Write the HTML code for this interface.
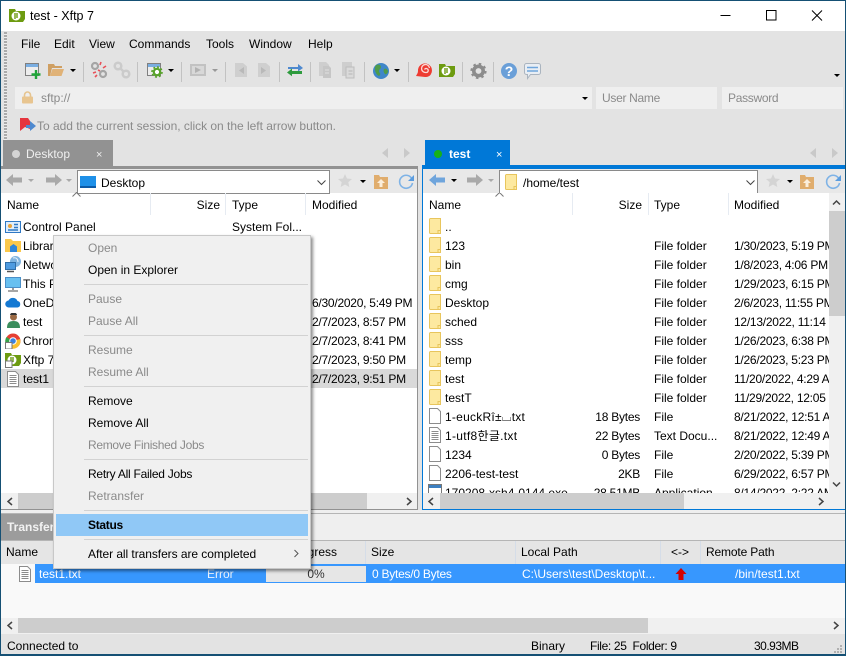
<!DOCTYPE html>
<html><head><meta charset="utf-8"><style>
html,body{margin:0;padding:0}
body{width:846px;height:656px;overflow:hidden;position:relative;background:#e3e3e3;font:12px "Liberation Sans","Noto Sans CJK KR",sans-serif;color:#000}
div,svg{position:absolute}
.t{line-height:18px;height:18px;white-space:nowrap}
.r{text-align:right}
.g{color:#8a8a8a}
.d{letter-spacing:-.25px}
.s{width:1px;background:#c2c2c2;height:20px;top:62px}
.sep{left:30px;width:224px;height:1px;background:#d2d2d2}
.dd{width:0;height:0;border-left:3px solid transparent;border-right:3px solid transparent;border-top:3px solid #000}
.ddg{width:0;height:0;border-left:3px solid transparent;border-right:3px solid transparent;border-top:3px solid #999}
.cs{width:1px;top:193px;height:22px;background:#e6ebf2}
.w{color:#fff}
</style></head><body>
<svg width="0" height="0" style="left:0;top:0"><defs>
<symbol id="fo" viewBox="0 0 12 16"><path d="M.5 1.500a1 1 0 0 1 1-1h10v15h-10a1 1 0 0 1-1-1z" fill="#fde9a0" stroke="#e8c55c"/><path d="M9 12.500h2.500v3H9z" fill="#fde9a0" stroke="#e8c55c"/></symbol>
<symbol id="fi" viewBox="0 0 12 16"><path d="M.5.500h8l3 3v12H.5z" fill="#fff" stroke="#8c8c8c"/></symbol>
<symbol id="do" viewBox="0 0 12 16"><path d="M.5.500h8l3 3v12H.5z" fill="#fff" stroke="#8c8c8c"/><path d="M2.500 4.500h7M2.500 6.500h7M2.500 8.500h7M2.500 10.500h7M2.500 12.500h7" stroke="#8c8c8c"/></symbol>
<symbol id="xf" viewBox="0 0 16 14"><path d="M0 0h6l1 2h9v8l-2 3h-14z" fill="#6d9b10"/><circle cx="7" cy="7" r="4.500" fill="#fff"/><path d="M6 4v6M8 4v5" stroke="#6d9b10" stroke-width="1.400"/></symbol>
</defs></svg>

<!-- Frame -->
<div style="left:0;top:0;width:846px;height:656px;box-sizing:border-box;border:1px solid #155074;z-index:50;border-bottom-width:2px;pointer-events:none"></div>
<div style="left:0;top:0;width:846px;height:31px;background:#fff"></div>
<svg style="left:9px;top:9px" width="16" height="13"><use href="#xf" width="16" height="14"/></svg>
<div class="t" style="left:30px;top:7px;font-size:12.500px">test - Xftp 7</div>
<svg style="left:720px;top:5px" width="120" height="22"><path d="M.5 10.500H10.500" stroke="#000" fill="none"/><path d="M46.500 5.500h9.500v9.500h-9.500z" stroke="#000" fill="none"/><path d="M92 5.500L102 15.500M102 5.500L92 15.500" stroke="#000" fill="none"/></svg>

<!-- gripper -->
<div style="left:4px;top:32px;width:3px;height:108px;background:repeating-linear-gradient(#aaa 0 2px,#eee 2px 3px)"></div>

<!-- Menu -->
<div class="t" style="left:21px;top:35px">File</div>
<div class="t" style="left:54px;top:35px">Edit</div>
<div class="t" style="left:89px;top:35px">View</div>
<div class="t" style="left:129px;top:35px">Commands</div>
<div class="t" style="left:206px;top:35px">Tools</div>
<div class="t" style="left:249px;top:35px">Window</div>
<div class="t" style="left:308px;top:35px">Help</div>

<!-- Toolbar (absolute coordinates) -->
<svg style="left:0;top:0" width="560" height="90" fill="none">
<path d="M25.500 63.500h13v12h-13z" fill="#ededed" stroke="#808080"/><path d="M26 64h12v3H26z" fill="#7aaee2"/><path d="M36 70v9M31.500 74.500h9" stroke="#21a53a" stroke-width="2.400"/>
<path d="M48 64h6l1 2h7v2H52l-2 8h-2z" fill="#cf9f62"/><path d="M50 76l2.500-7h11.500l-2.500 7z" fill="#e0b277"/>
<g stroke="#a5a5a5" stroke-width="2.200"><circle cx="95" cy="66" r="3"/><circle cx="103" cy="74" r="3"/></g><path d="M101 62l-1 3M106 66l-3 2M93 73l3-1M95 77l2-2M98 70l2 1" stroke="#e8525a" stroke-width="1.600"/>
<g stroke="#cbcbcb" stroke-width="2.500"><circle cx="118" cy="66" r="3.300"/><circle cx="126" cy="74" r="3.300"/><path d="M120 68l4 4"/></g>
<path d="M147.500 63.500h13v12h-13z" fill="#ededed" stroke="#808080"/><path d="M148 64h12v3h-12z" fill="#7aaee2"/><circle cx="157" cy="72" r="3.200" stroke="#57a32a" stroke-width="2.200" fill="#fff"/><circle cx="157" cy="72" r="5" stroke="#57a32a" stroke-dasharray="2 1.900" stroke-width="1.600"/>
<path d="M191 65h14v10h-14z" stroke="#c2c2c2" stroke-width="2" fill="#d8d8d8"/><path d="M195 67l6 3-6 3z" fill="#b2b2b2"/>
<path d="M235 63h8l4 3.500V77h-12z" fill="#cfcfcf"/><path d="M244 67l-5 3.500 5 3.500z" fill="#b9b9b9"/>
<path d="M258 63h8l4 3.500V77h-12z" fill="#cfcfcf"/><path d="M261 67l5 3.500-5 3.500z" fill="#b9b9b9"/>
<path d="M288 67h10v-3l5 4-5 3.500v-2.500h-10z" fill="#4e89cf"/><path d="M302 71h-10v-2.500l-5 4 5 3.800V74h10z" fill="#2e9b3e"/>
<path d="M319 62h7l3 3v11h-10z" fill="#cecece"/><path d="M325 66h4l2 2v10h-8V66z" fill="#c6c6c6"/><path d="M325 70h4M325 73h4" stroke="#e0e0e0"/>
<path d="M342 62h9v3h-9z" fill="#cecece"/><path d="M342 62h10v14h-10z" fill="#cecece"/><path d="M347 67h7v11h-8V67z" fill="#dadada" stroke="#bcbcbc"/><path d="M348.500 71h4M348.500 74h4" stroke="#b5b5b5"/>
<circle cx="381" cy="71" r="8" fill="#3f87c9"/><path d="M376 65c3-1 5 0 5 2s-2 2-2 4 2 2 1 4-3 0-4-2-2-5 0-8zM384 69c2-1 3 0 4 2 0 2-2 4-3 3s-2-3-1-5z" fill="#4f9b4a"/>
<path d="M416 76c1-2 2-3 2-5a7 7 0 1 1 13 3c-1 2-3 3-6 3z" fill="#ee3b32"/><path d="M424.500 69.500a2 2 0 1 1 1.500 3 4 4 0 1 1 3.500-4.500" stroke="#fbd9d6" stroke-width="1.300"/>
<use href="#xf" x="439" y="64" width="16" height="14"/>
<circle cx="478.500" cy="71" r="4.700" stroke="#8c8c8c" stroke-width="3.600"/><circle cx="478.500" cy="71" r="7" stroke="#8c8c8c" stroke-width="2.200" stroke-dasharray="2.500 3"/>
<circle cx="509" cy="71" r="8" fill="#6a9fd8"/>
<text x="509" y="76" font-family="Liberation Sans" font-weight="bold" font-size="14" fill="#fff" text-anchor="middle">?</text>
<path d="M526.500 63.500h12a2 2 0 0 1 2 2v7a2 2 0 0 1-2 2h-8l-3 4v-4h-1a2 2 0 0 1-2-2v-7a2 2 0 0 1 2-2z" fill="#e9eef4" stroke="#aab4bf"/><path d="M527 67.500h11M527 71h11" stroke="#6fa5dc" stroke-width="1.600"/>
</svg>
<div class="s" style="left:83px"></div><div class="s" style="left:137px"></div><div class="s" style="left:181px"></div><div class="s" style="left:225px"></div><div class="s" style="left:279px"></div><div class="s" style="left:310px"></div><div class="s" style="left:364px"></div><div class="s" style="left:408px"></div><div class="s" style="left:462px"></div><div class="s" style="left:493px"></div>
<div class="dd" style="left:70px;top:69px"></div><div class="dd" style="left:168px;top:69px"></div><div class="ddg" style="left:212px;top:69px"></div><div class="dd" style="left:394px;top:69px"></div><div class="dd" style="left:834px;top:74px"></div>

<!-- Address bar -->
<div style="left:15px;top:87px;width:577px;height:22px;background:#efefef"></div>
<div style="left:596px;top:87px;width:121px;height:22px;background:#efefef"></div>
<div style="left:722px;top:87px;width:121px;height:22px;background:#efefef"></div>
<svg style="left:22px;top:91px" width="11" height="13"><path d="M2.500 6V4a3 3 0 0 1 6 0v2" fill="none" stroke="#e6c48f" stroke-width="1.600"/><rect x="0" y="5.500" width="11" height="7" rx="1" fill="#e8c590"/></svg>
<div class="t g" style="left:41px;top:89px">sftp://</div>
<div class="dd" style="left:582px;top:97px"></div>
<div class="t g" style="left:602px;top:89px;letter-spacing:-.3px">User Name</div>
<div class="t g" style="left:728px;top:89px;letter-spacing:-.3px">Password</div>

<!-- Session hint -->
<svg style="left:20px;top:118px" width="16" height="15"><path d="M0 0h8l2 3v8l-5-2-5 4z" fill="#e5353e"/><path d="M6 7h4V3l6 5-6 5V10H6z" fill="#4e89cf"/></svg>
<div class="t g" style="left:37px;top:117px;letter-spacing:-.02px">To add the current session, click on the left arrow button.</div>

<!-- Tabs -->
<div style="left:3px;top:140px;width:110px;height:26px;background:#929292"></div>
<div style="left:12px;top:150px;width:8px;height:8px;border-radius:50%;background:#d4d4d4"></div>
<div class="t" style="left:26px;top:145px;color:#f0f0f0">Desktop</div>
<div class="t" style="left:96px;top:146px;color:#eee;font-size:11px">×</div>
<svg style="left:381px;top:147px" width="30" height="12"><path d="M7 1v10L1 6zM23 1v10l6-5z" fill="#c9c9c9"/></svg>

<div style="left:425px;top:140px;width:85px;height:26px;background:#0078d7"></div>
<div style="left:434px;top:150px;width:8px;height:8px;border-radius:50%;background:#17b117"></div>
<div class="t w" style="left:449px;top:145px;font-weight:bold">test</div>
<div class="t w" style="left:496px;top:146px;font-size:11px">×</div>
<svg style="left:809px;top:147px" width="30" height="12"><path d="M7 1v10L1 6zM23 1v10l6-5z" fill="#c9c9c9"/></svg>

<!-- Left pane -->
<div style="left:1px;top:166px;width:417px;height:344px;background:#fff"></div>
<div style="left:1px;top:166px;width:417px;height:3px;background:#929292"></div>
<div style="left:417px;top:166px;width:1px;height:344px;background:#929292"></div>
<div style="left:1px;top:509px;width:417px;height:1px;background:#929292"></div>
<div style="left:1px;top:169px;width:416px;height:24px;background:#e8e8e8"></div>
<svg style="left:6px;top:173px" width="70" height="16"><path d="M0 7l7-6v3.500h9v5H7V13z" fill="#a9a9a9"/><path d="M22 6h6l-3 3z" fill="#aaa"/><path d="M56 7l-7-6v3.500h-9v5h9V13z" fill="#a9a9a9"/><path d="M60 6h6l-3 3z" fill="#aaa"/></svg>
<div style="left:77px;top:170px;width:251px;height:22px;background:#fff;border:1px solid #8a8a8a"></div>
<svg style="left:80px;top:176px" width="16" height="13"><rect width="16" height="12" fill="#1e90e8"/><rect y="10" width="16" height="2" fill="#0c5aa6"/></svg>
<div class="t" style="left:101px;top:174px">Desktop</div>
<svg style="left:317px;top:180px" width="10" height="6"><path d="M.5.500L4.500 4.500 8.500.500" stroke="#444" fill="none"/></svg>
<svg style="left:338px;top:172px" width="78" height="18"><path d="M7 2l2 4.500 5 .5-3.700 3.300 1 4.700L7 12.500 2.700 15l1-4.700L0 7l5-.5z" fill="#d4d4d4"/><path d="M22 8h6l-3 3z" fill="#000"/><path d="M36 3h5l1 2h8v12h-14z" fill="#e0ad6d"/><path d="M43 7l-4 4h2.500v4h3v-4H47z" fill="#fbeedb"/><path d="M74 7a6.500 6.500 0 1 0 .5 4" fill="none" stroke="#7fb3e6" stroke-width="1.600"/><path d="M76 3v6h-6z" fill="#5b9de0"/></svg>
<!-- left header -->
<div class="t" style="left:7px;top:196px">Name</div>
<div class="t r" style="left:150px;width:70px;top:196px">Size</div>
<div class="t" style="left:232px;top:196px">Type</div>
<div class="t" style="left:312px;top:196px">Modified</div>
<div class="cs" style="left:150px"></div><div class="cs" style="left:225px"></div><div class="cs" style="left:305px"></div>
<svg style="left:72px;top:192px" width="9" height="5"><path d="M.5 4.500L4.500.5l4 4" stroke="#777" fill="none"/></svg>

<!-- left rows -->
<div style="left:1px;top:369px;width:416px;height:19px;background:#d9d9d9"></div>
<svg style="left:5px;top:221px" width="16" height="12"><rect x=".5" y=".5" width="15" height="11" fill="#dfeefc" stroke="#2f78c4"/><rect x="3" y="3" width="4" height="4" rx="2" fill="#e8a33a"/><path d="M9 3.500h4M9 6.500h4M3 9h10" stroke="#2f78c4" stroke-width="1.400"/></svg>
<div class="t" style="left:23px;top:218px">Control Panel</div>
<div class="t" style="left:232px;top:218px">System Fol...</div>
<svg style="left:5px;top:238px" width="16" height="14"><path d="M0 1h6l2 2h8v11H0z" fill="#fbc84a"/><path d="M5 8.500l3.500-2.500 3.500 2.500v5.500H5z" fill="#2f86d8"/></svg>
<div class="t" style="left:23px;top:237px">Library</div>
<svg style="left:5px;top:256px" width="16" height="17"><circle cx="10.500" cy="5.500" r="5.500" fill="#7fb4e0"/><path d="M8 2c3-1 5 1 5 4" stroke="#e8f2fb" fill="none"/><rect x=".5" y="6.500" width="10" height="7" fill="#4e9be0" stroke="#2f6ea8"/><path d="M2 15.500h7" stroke="#555" stroke-width="1.500"/></svg>
<div class="t" style="left:23px;top:256px">Network</div>
<svg style="left:5px;top:277px" width="16" height="15"><rect x=".5" y=".5" width="15" height="10" fill="#68c0f0" stroke="#4a8fc8"/><path d="M8 11v2" stroke="#999" stroke-width="2"/><path d="M3 14h10" stroke="#888" stroke-width="1.500"/></svg>
<div class="t" style="left:23px;top:275px">This PC</div>
<svg style="left:5px;top:297px" width="16" height="11"><path d="M4 10.500a3.500 3.500 0 0 1-.5-7A5 5 0 0 1 12.500 4a3.300 3.300 0 0 1 0 6.500z" fill="#1479d3"/></svg>
<div class="t" style="left:23px;top:294px">OneDrive</div>
<div class="t d" style="left:312px;top:294px">6/30/2020, 5:49 PM</div>
<svg style="left:7px;top:313px" width="13" height="16"><circle cx="6.500" cy="4" r="3.500" fill="#9b6a45"/><path d="M3 2a3.500 2.500 0 0 1 7 0H3z" fill="#333"/><path d="M0 15c0-5 2-7 6.500-7s6.500 2 6.500 7z" fill="#3a8d5c"/></svg>
<div class="t" style="left:23px;top:313px">test</div>
<div class="t d" style="left:312px;top:313px">2/7/2023, 8:57 PM</div>
<svg style="left:5px;top:333px" width="16" height="16"><circle cx="8" cy="8" r="7.500" fill="#e64034"/><path d="M8 8L1.500 4A7.500 7.500 0 0 0 6 15.500z" fill="#37a24b"/><path d="M8 8l7-2a7.500 7.500 0 0 1-9 9.500z" fill="#fbc02d"/><circle cx="8" cy="8" r="3.300" fill="#3b82e0" stroke="#fff"/><rect x=".5" y="9.500" width="6.500" height="6.500" fill="#fff" stroke="#777"/></svg>
<div class="t" style="left:23px;top:332px">Chrome</div>
<div class="t d" style="left:312px;top:332px">2/7/2023, 8:41 PM</div>
<svg style="left:5px;top:353px" width="16" height="15"><use href="#xf" width="16" height="14"/><rect x=".5" y="8" width="6.500" height="6.500" fill="#fff" stroke="#777"/></svg>
<div class="t" style="left:23px;top:351px">Xftp 7</div>
<div class="t d" style="left:312px;top:351px">2/7/2023, 9:50 PM</div>
<svg style="left:7px;top:371px" width="12" height="16"><use href="#do" width="12" height="16"/></svg>
<div class="t" style="left:23px;top:370px">test1</div>
<div class="t d" style="left:312px;top:370px">2/7/2023, 9:51 PM</div>

<!-- left hscroll -->
<div style="left:1px;top:493px;width:416px;height:16px;background:#f0f0f0"></div>
<div style="left:18px;top:493px;width:349px;height:16px;background:#cdcdcd"></div>
<svg style="left:6px;top:497px" width="8" height="9"><path d="M6 1L2 4.500 6 8" stroke="#444" stroke-width="1.500" fill="none"/></svg>
<svg style="left:405px;top:497px" width="8" height="9"><path d="M2 1l4 3.500L2 8" stroke="#444" stroke-width="1.500" fill="none"/></svg>

<!-- Right pane -->
<div style="left:422px;top:165px;width:423px;height:345px;background:#fff"></div>
<div style="left:422px;top:165px;width:423px;height:4px;background:#0078d7"></div>
<div style="left:422px;top:165px;width:1px;height:345px;background:#0078d7"></div>
<div style="left:422px;top:509px;width:423px;height:1px;background:#0078d7"></div>
<div style="left:423px;top:169px;width:422px;height:24px;background:#e8e8e8"></div>
<svg style="left:429px;top:173px" width="70" height="16"><path d="M0 7l7-6v3.500h9v5H7V13z" fill="#6fa5dc"/><path d="M22 6h6l-3 3z" fill="#000"/><path d="M54 7l-7-6v3.500h-9v5h9V13z" fill="#a9a9a9"/><path d="M59 6h6l-3 3z" fill="#aaa"/></svg>
<div style="left:499px;top:170px;width:257px;height:22px;background:#fff;border:1px solid #8a8a8a"></div>
<svg style="left:505px;top:174px" width="12" height="16"><use href="#fo" width="12" height="16"/></svg>
<div class="t" style="left:523px;top:174px">/home/test</div>
<svg style="left:746px;top:180px" width="10" height="6"><path d="M.5.500L4.500 4.500 8.500.500" stroke="#444" fill="none"/></svg>
<svg style="left:766px;top:172px" width="78" height="18"><path d="M7 2l2 4.500 5 .5-3.700 3.300 1 4.700L7 12.500 2.700 15l1-4.700L0 7l5-.5z" fill="#d4d4d4"/><path d="M21 8h6l-3 3z" fill="#000"/><path d="M34 3h5l1 2h8v12h-14z" fill="#e0ad6d"/><path d="M41 7l-4 4h2.500v4h3v-4H45z" fill="#fbeedb"/><path d="M73 7a6.500 6.500 0 1 0 .5 4" fill="none" stroke="#7fb3e6" stroke-width="1.600"/><path d="M75 3v6h-6z" fill="#5b9de0"/></svg>

<!-- right list clipped -->
<div style="left:423px;top:193px;width:406px;height:300px;overflow:hidden;background:#fff">
<div class="t" style="left:6px;top:3px">Name</div>
<div class="t r" style="left:149px;width:70px;top:3px">Size</div>
<div class="t" style="left:231px;top:3px">Type</div>
<div class="t" style="left:311px;top:3px">Modified</div>
<div class="cs" style="left:149px;top:0"></div><div class="cs" style="left:225px;top:0"></div><div class="cs" style="left:305px;top:0"></div>
<svg style="left:72px;top:-1px" width="9" height="5"><path d="M.5 4.500L4.500.5l4 4" stroke="#777" fill="none"/></svg>
<svg style="left:6px;top:25px" width="12" height="16"><use href="#fo" width="12" height="16"/></svg><div class="t" style="left:22px;top:25px">..</div>
<svg style="left:6px;top:44px" width="12" height="16"><use href="#fo" width="12" height="16"/></svg><div class="t" style="left:22px;top:44px">123</div><div class="t" style="left:231px;top:44px">File folder</div><div class="t d" style="left:311px;top:44px">1/30/2023, 5:19 PM</div>
<svg style="left:6px;top:63px" width="12" height="16"><use href="#fo" width="12" height="16"/></svg><div class="t" style="left:22px;top:63px">bin</div><div class="t" style="left:231px;top:63px">File folder</div><div class="t d" style="left:311px;top:63px">1/8/2023, 4:06 PM</div>
<svg style="left:6px;top:82px" width="12" height="16"><use href="#fo" width="12" height="16"/></svg><div class="t" style="left:22px;top:82px">cmg</div><div class="t" style="left:231px;top:82px">File folder</div><div class="t d" style="left:311px;top:82px">1/29/2023, 6:15 PM</div>
<svg style="left:6px;top:101px" width="12" height="16"><use href="#fo" width="12" height="16"/></svg><div class="t" style="left:22px;top:101px">Desktop</div><div class="t" style="left:231px;top:101px">File folder</div><div class="t d" style="left:311px;top:101px">2/6/2023, 11:55 PM</div>
<svg style="left:6px;top:120px" width="12" height="16"><use href="#fo" width="12" height="16"/></svg><div class="t" style="left:22px;top:120px">sched</div><div class="t" style="left:231px;top:120px">File folder</div><div class="t d" style="left:311px;top:120px">12/13/2022, 11:14 PM</div>
<svg style="left:6px;top:139px" width="12" height="16"><use href="#fo" width="12" height="16"/></svg><div class="t" style="left:22px;top:139px">sss</div><div class="t" style="left:231px;top:139px">File folder</div><div class="t d" style="left:311px;top:139px">1/26/2023, 6:38 PM</div>
<svg style="left:6px;top:158px" width="12" height="16"><use href="#fo" width="12" height="16"/></svg><div class="t" style="left:22px;top:158px">temp</div><div class="t" style="left:231px;top:158px">File folder</div><div class="t d" style="left:311px;top:158px">1/26/2023, 5:23 PM</div>
<svg style="left:6px;top:177px" width="12" height="16"><use href="#fo" width="12" height="16"/></svg><div class="t" style="left:22px;top:177px">test</div><div class="t" style="left:231px;top:177px">File folder</div><div class="t d" style="left:311px;top:177px">11/20/2022, 4:29 AM</div>
<svg style="left:6px;top:196px" width="12" height="16"><use href="#fo" width="12" height="16"/></svg><div class="t" style="left:22px;top:196px">testT</div><div class="t" style="left:231px;top:196px">File folder</div><div class="t d" style="left:311px;top:196px">11/29/2022, 12:05 PM</div>
<svg style="left:6px;top:215px" width="12" height="16"><use href="#fi" width="12" height="16"/></svg><div class="t" style="left:22px;top:215px;letter-spacing:.25px">1-euckRî±⌴txt</div><div class="t r d" style="left:149px;width:68px;top:215px">18 Bytes</div><div class="t" style="left:231px;top:215px">File</div><div class="t d" style="left:311px;top:215px">8/21/2022, 12:51 AM</div>
<svg style="left:6px;top:234px" width="12" height="16"><use href="#do" width="12" height="16"/></svg><div class="t" style="left:22px;top:234px;letter-spacing:.3px">1-utf8한글.txt</div><div class="t r d" style="left:149px;width:68px;top:234px">22 Bytes</div><div class="t" style="left:231px;top:234px">Text Docu...</div><div class="t d" style="left:311px;top:234px">8/21/2022, 12:49 AM</div>
<svg style="left:6px;top:253px" width="12" height="16"><use href="#fi" width="12" height="16"/></svg><div class="t" style="left:22px;top:253px">1234</div><div class="t r d" style="left:149px;width:68px;top:253px">0 Bytes</div><div class="t" style="left:231px;top:253px">File</div><div class="t d" style="left:311px;top:253px">2/20/2022, 5:39 PM</div>
<svg style="left:6px;top:272px" width="12" height="16"><use href="#fi" width="12" height="16"/></svg><div class="t" style="left:22px;top:272px">2206-test-test</div><div class="t r d" style="left:149px;width:68px;top:272px">2KB</div><div class="t" style="left:231px;top:272px">File</div><div class="t d" style="left:311px;top:272px">6/29/2022, 6:57 PM</div>
<svg style="left:5px;top:291px" width="14" height="14"><rect x=".5" y=".5" width="13" height="13" fill="#fff" stroke="#777"/><rect x="1" y="1" width="12" height="3" fill="#3c7fc0"/></svg><div class="t" style="left:22px;top:291px">170208-xsh4-0144.exe</div><div class="t r d" style="left:149px;width:68px;top:291px">28.51MB</div><div class="t" style="left:231px;top:291px">Application</div><div class="t d" style="left:311px;top:291px">8/14/2022, 2:22 AM</div>
</div>

<!-- right vscroll -->
<div style="left:829px;top:193px;width:16px;height:300px;background:#f0f0f0"></div>
<div style="left:829px;top:211px;width:16px;height:105px;background:#cdcdcd"></div>
<svg style="left:832px;top:199px" width="9" height="7"><path d="M1 5.500L4.500 2 8 5.500" stroke="#444" stroke-width="1.500" fill="none"/></svg>
<svg style="left:832px;top:481px" width="9" height="7"><path d="M1 1.500L4.500 5 8 1.500" stroke="#444" stroke-width="1.500" fill="none"/></svg>
<!-- right hscroll -->
<div style="left:423px;top:493px;width:422px;height:16px;background:#f0f0f0"></div>
<div style="left:440px;top:493px;width:244px;height:16px;background:#cdcdcd"></div>
<svg style="left:427px;top:497px" width="8" height="9"><path d="M6 1L2 4.500 6 8" stroke="#444" stroke-width="1.500" fill="none"/></svg>
<svg style="left:817px;top:497px" width="8" height="9"><path d="M2 1l4 3.500L2 8" stroke="#444" stroke-width="1.500" fill="none"/></svg>

<!-- Transfer area -->
<div style="left:1px;top:510px;width:844px;height:3px;background:#efefef"></div>
<div style="left:1px;top:513px;width:844px;height:27px;background:#efefef;border-top:1px solid #b5b5b5;box-sizing:border-box"></div>
<div style="left:1px;top:514px;width:60px;height:26px;background:#9c9c9c"></div>
<div class="t" style="left:7px;top:518px;color:#f2f2f2;font-weight:bold">Transfer</div>
<div style="left:1px;top:540px;width:844px;height:1px;background:#b5b5b5"></div>
<div style="left:1px;top:541px;width:844px;height:23px;background:#e5e5e5"></div>
<div class="t" style="left:6px;top:543px">Name</div>
<div class="t" style="left:289px;top:543px">Progress</div>
<div class="t" style="left:371px;top:543px">Size</div>
<div class="t" style="left:521px;top:543px">Local Path</div>
<div class="t" style="left:671px;top:543px">&lt;-&gt;</div>
<div class="t" style="left:706px;top:543px;letter-spacing:-.15px">Remote Path</div>
<div style="left:365px;top:541px;width:1px;height:23px;background:#d5dde8"></div>
<div style="left:515px;top:541px;width:1px;height:23px;background:#d5dde8"></div>
<div style="left:660px;top:541px;width:1px;height:23px;background:#d5dde8"></div>
<div style="left:700px;top:541px;width:1px;height:23px;background:#d5dde8"></div>
<div style="left:1px;top:564px;width:844px;height:54px;background:#f9f9f9"></div>
<div style="left:35px;top:564px;width:810px;height:19px;background:#3797fe"></div>
<svg style="left:19px;top:566px" width="12" height="16"><use href="#do" width="12" height="16"/></svg>
<div class="t w" style="left:39px;top:565px">test1.txt</div>
<div class="t" style="left:207px;top:565px;color:#eaf3ff">Error</div>
<div style="left:266px;top:566px;width:100px;height:16px;background:#e6e6e6"></div>
<div class="t" style="left:266px;top:565px;width:100px;text-align:center;color:#333">0%</div>
<div class="t w d" style="left:372px;top:565px">0 Bytes/0 Bytes</div>
<div class="t w" style="left:522px;top:565px">C:\Users\test\Desktop\t...</div>
<svg style="left:675px;top:568px" width="12" height="12"><path d="M6 0l5.500 6H8.500v6h-5V6H.5z" fill="#d40000"/></svg>
<div class="t w" style="left:735px;top:565px">/bin/test1.txt</div>

<!-- bottom scroll -->
<div style="left:1px;top:618px;width:844px;height:16px;background:#f0f0f0"></div>
<div style="left:18px;top:618px;width:630px;height:15px;background:#cdcdcd"></div>
<svg style="left:6px;top:621px" width="8" height="9"><path d="M6 1L2 4.500 6 8" stroke="#444" stroke-width="1.500" fill="none"/></svg>
<svg style="left:832px;top:621px" width="8" height="9"><path d="M2 1l4 3.500L2 8" stroke="#444" stroke-width="1.500" fill="none"/></svg>

<!-- status bar -->
<div style="left:1px;top:634px;width:844px;height:21px;background:#e3e3e3"></div>
<div class="t" style="left:7px;top:637px">Connected to</div>
<div class="t" style="left:531px;top:637px">Binary</div>
<div class="t" style="left:590px;top:637px;letter-spacing:-.35px">File: 25&nbsp; Folder: 9</div>
<div class="t" style="left:754px;top:637px;letter-spacing:-.5px">30.93MB</div>
<svg style="left:833px;top:644px" width="10" height="10"><path d="M7 1h2v2H7zM4 4h2v2H4zM7 4h2v2H7zM1 7h2v2H1zM4 7h2v2H4zM7 7h2v2H7z" fill="#b0b0b0"/></svg>

<!-- Context menu -->
<div style="left:53px;top:235px;width:256px;height:332px;background:#f0f0f0;border:1px solid #c8c8c8;box-shadow:2px 2px 3px rgba(0,0,0,.45);z-index:10">
<div style="left:2px;top:278px;width:252px;height:22px;background:#90c8f6"></div>
<div class="t g" style="left:34px;top:3px">Open</div>
<div class="t" style="left:34px;top:25px">Open in Explorer</div>
<div class="sep" style="top:48px"></div>
<div class="t g" style="left:34px;top:54px">Pause</div>
<div class="t g" style="left:34px;top:76px">Pause All</div>
<div class="sep" style="top:99px"></div>
<div class="t g" style="left:34px;top:105px">Resume</div>
<div class="t g" style="left:34px;top:127px">Resume All</div>
<div class="sep" style="top:150px"></div>
<div class="t" style="left:34px;top:156px">Remove</div>
<div class="t" style="left:34px;top:178px">Remove All</div>
<div class="t g" style="left:34px;top:200px;letter-spacing:-.3px">Remove Finished Jobs</div>
<div class="sep" style="top:223px"></div>
<div class="t" style="left:34px;top:229px;letter-spacing:-.25px">Retry All Failed Jobs</div>
<div class="t g" style="left:34px;top:251px">Retransfer</div>
<div class="sep" style="top:274px"></div>
<div class="t" style="left:34px;top:280px;font-weight:bold;letter-spacing:-.3px">Status</div>
<div class="sep" style="top:303px"></div>
<div class="t" style="left:34px;top:309px;letter-spacing:-.06px">After all transfers are completed</div>
<svg style="left:239px;top:313px" width="7" height="9"><path d="M1.500 1l3.500 3.500L1.500 8" stroke="#555" fill="none"/></svg>
</div>
</body></html>
